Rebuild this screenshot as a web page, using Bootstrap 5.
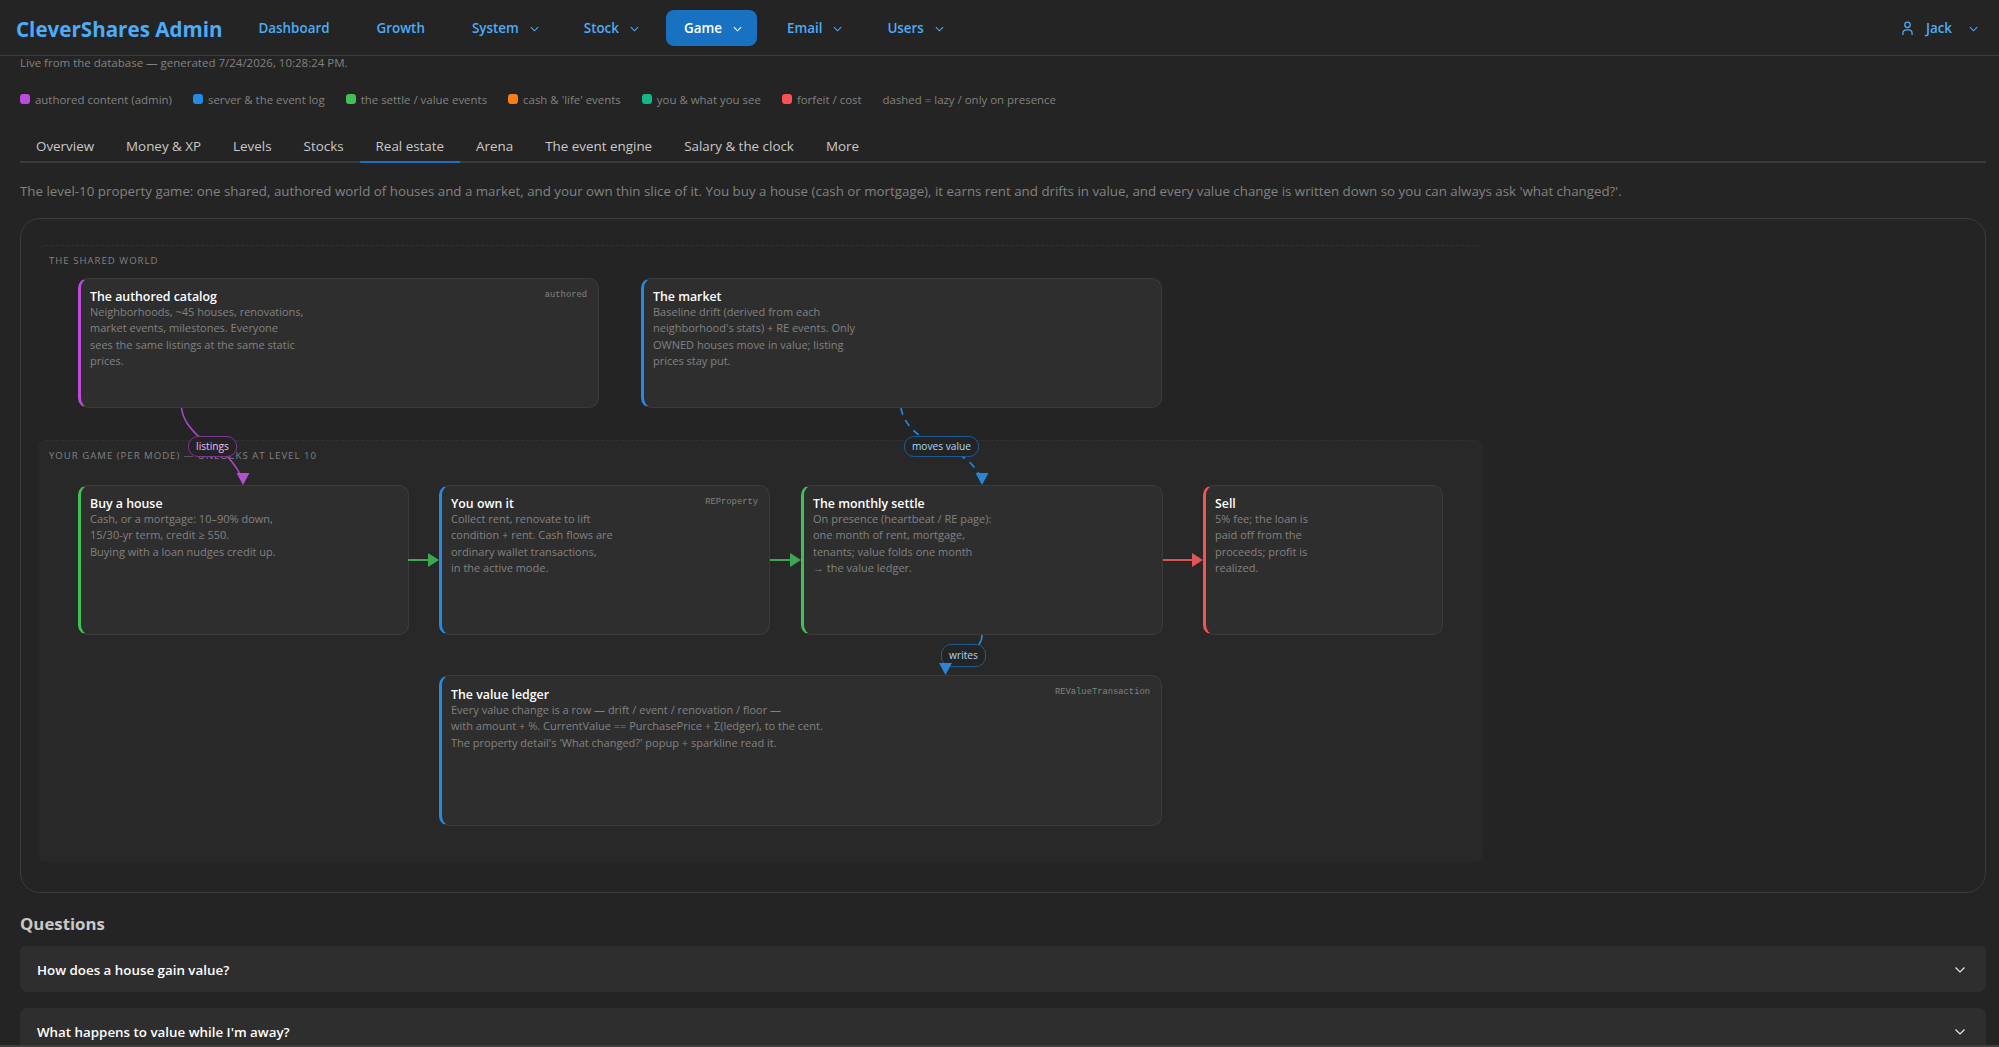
<!DOCTYPE html>
<html lang="en" data-bs-theme="dark">
<head>
    <meta charset="UTF-8">
    <meta name="viewport" content="width=device-width, initial-scale=1.0">
    <title>CleverShares Admin</title>
    <link href="https://cdn.jsdelivr.net/npm/bootstrap@5.3.0/dist/css/bootstrap.min.css" rel="stylesheet">
    <style>
        html, body {
            height: 100%;
            overflow: hidden;
        }

        body {
            background-color: #242424;
            color: #c9c9c9;
            font-family: "Open Sans", "Noto Sans", sans-serif;
            font-size: 13.2px;
        }

        .top-bar {
            height: 56px;
            padding: 0 10px 0 16px;
            background-color: #242424;
            border-bottom: 1px solid #3b3b3b;
        }

        .top-bar .brand-name {
            color: #4dabf7;
            font-size: 20.6px;
            font-weight: 700;
            padding: 3px 0 0;
            margin: 0 18px 0 0;
        }

        .top-links {
            gap: 12px;
        }

        .top-bar .navbar-nav .nav-link {
            display: flex;
            align-items: center;
            gap: 11px;
            height: 36px;
            padding: 2px 15px 0 18px;
            border-radius: 8px;
            color: #4dabf7;
            font-size: 13.4px;
            font-weight: 600;
        }

        .top-bar .navbar-nav .nav-link.plain-link {
            padding-right: 17px;
        }

        .top-bar .navbar-nav .nav-link.on {
            background-color: #1971c2;
            color: #fff;
        }

        .top-bar .navbar-nav .nav-link.user-link {
            padding-right: 11px;
        }

        .user-link svg.person {
            margin-right: 2px;
        }

        .user-link svg.user-caret {
            margin-left: 6px;
        }

        .page-body {
            padding: 0 13px 0 20px;
        }

        .gen-line {
            color: #828282;
            font-size: 11.5px;
            line-height: 14px;
        }

        .legend-row {
            margin-top: 20px;
            height: 20px;
            color: #828282;
            font-size: 11.45px;
            gap: 21px;
        }

        .legend-dot {
            display: inline-block;
            width: 10px;
            height: 10px;
            border-radius: 3px;
            margin-right: 5px;
        }

        .tab-row {
            margin-top: 13px;
            border-bottom: 2px solid #3b3b3b;
            gap: 0;
        }

        .tab-row .nav-link {
            padding: 13px 16px 0;
            margin-bottom: -2px;
            height: 40px;
            line-height: 20px;
            color: #c9c9c9;
            font-size: 13.4px;
            border: 0;
            border-bottom: 2px solid transparent;
            border-radius: 0;
            background: none;
        }

        .tab-row .nav-link.active {
            border: 0;
            border-bottom: 2px solid #1971c2;
            color: #c9c9c9;
            background: none;
        }

        .intro-text {
            margin: 17px 0 16px;
            line-height: 22px;
            color: #828282;
            font-size: 13.34px;
        }

        .flow-panel {
            position: relative;
            height: 675px;
            border: 1px solid #3b3b3b;
            border-radius: 20px;
        }

        .flow-zone {
            position: absolute;
            left: 17px;
            width: 1445px;
            padding: 8px 11px;
            border-top: 1px dashed #323232;
            border-radius: 8px;
            color: #828282;
            font-size: 9.6px;
            line-height: 14px;
            letter-spacing: 1px;
            text-transform: uppercase;
        }

        .zone-shared {
            top: 26px;
            height: 190px;
        }

        .zone-game {
            top: 221px;
            height: 422px;
            background-color: #282828;
        }

        .flow-node {
            position: absolute;
            padding: 10px 9px 0 9px;
            background-color: #2e2e2e;
            border: 1px solid #3b3b3b;
            border-left: 3px solid #228be6;
            border-radius: 10px;
            color: #828282;
            font-size: 11px;
            line-height: 16.3px;
        }

        .flow-node h6 {
            margin: 0;
            color: #fff;
            font-size: 12.35px;
            font-weight: 600;
            line-height: 15px;
        }

        .flow-tag {
            position: absolute;
            top: 10px;
            right: 11px;
            color: #828282;
            font-family: "Liberation Mono", monospace;
            font-size: 8.8px;
            line-height: 12px;
        }

        .node-grape { border-left-color: #be4bdb; }
        .node-green { border-left-color: #40c057; }
        .node-red { border-left-color: #fa5252; }

        #nodeCatalog { left: 57px; top: 59px; width: 521px; height: 130px; }
        #nodeMarket { left: 620px; top: 59px; width: 521px; height: 130px; }
        #nodeBuy { left: 57px; top: 266px; width: 331px; height: 150px; }
        #nodeOwn { left: 418px; top: 266px; width: 331px; height: 150px; }
        #nodeSettle { left: 780px; top: 266px; width: 362px; height: 150px; }
        #nodeSell { left: 1182px; top: 266px; width: 240px; height: 150px; }
        #nodeLedger { left: 418px; top: 456px; width: 723px; height: 151px; padding-top: 11px; }

        .flow-edges {
            position: absolute;
            left: 0;
            top: 0;
        }

        .edge-pill {
            position: absolute;
            height: 21px;
            line-height: 19px;
            background-color: #242424;
            border: 1px solid #1c5a94;
            border-radius: 10px;
            color: #a5d8ff;
            font-size: 10.2px;
            text-align: center;
        }

        #pillListings {
            left: 167px;
            top: 217px;
            width: 49px;
            border-color: #7f3592;
            color: #eebefa;
        }

        #pillMoves { left: 883px; top: 217px; width: 75px; }
        #pillWrites { left: 920px; top: 425px; width: 45px; height: 23px; line-height: 21px; }

        .questions-title {
            margin: 18px 0 9px;
            color: #c9c9c9;
            font-size: 16.8px;
            font-weight: 700;
            line-height: 26px;
        }

        .faq-list {
            --bs-accordion-bg: #2e2e2e;
            --bs-accordion-border-width: 0;
            --bs-accordion-btn-color: #fff;
            --bs-accordion-active-color: #fff;
            --bs-accordion-active-bg: #2e2e2e;
            --bs-accordion-btn-focus-box-shadow: none;
        }

        .faq-list .accordion-item {
            margin-bottom: 16px;
            border-radius: 8px;
        }

        .faq-list .accordion-button {
            height: 46px;
            padding: 1px 21px 0 17px;
            border-radius: 8px;
            font-size: 13.35px;
            font-weight: 600;
            box-shadow: none;
        }

        .faq-list .accordion-button::after {
            display: none;
        }

        .faq-list .accordion-button svg {
            margin-left: auto;
        }

        .bottom-strip {
            height: 2px;
            background-color: #3d413d;
        }
    </style>
</head>
<body>

    <nav class="navbar navbar-expand top-bar">
        <a class="navbar-brand brand-name" href="#">CleverShares Admin</a>
        <ul class="navbar-nav top-links">
            <li class="nav-item"><a class="nav-link plain-link" href="#">Dashboard</a></li>
            <li class="nav-item"><a class="nav-link plain-link" href="#">Growth</a></li>
            <li class="nav-item"><a class="nav-link" href="#">System <svg width="9" height="6" viewBox="0 0 10 6" fill="none" stroke="currentColor" stroke-width="1.2"><path d="M1 1l4 4 4-4"/></svg></a></li>
            <li class="nav-item"><a class="nav-link" href="#">Stock <svg width="9" height="6" viewBox="0 0 10 6" fill="none" stroke="currentColor" stroke-width="1.2"><path d="M1 1l4 4 4-4"/></svg></a></li>
            <li class="nav-item"><a class="nav-link on" href="#">Game <svg width="9" height="6" viewBox="0 0 10 6" fill="none" stroke="currentColor" stroke-width="1.2"><path d="M1 1l4 4 4-4"/></svg></a></li>
            <li class="nav-item"><a class="nav-link" href="#">Email <svg width="9" height="6" viewBox="0 0 10 6" fill="none" stroke="currentColor" stroke-width="1.2"><path d="M1 1l4 4 4-4"/></svg></a></li>
            <li class="nav-item"><a class="nav-link" href="#">Users <svg width="9" height="6" viewBox="0 0 10 6" fill="none" stroke="currentColor" stroke-width="1.2"><path d="M1 1l4 4 4-4"/></svg></a></li>
        </ul>
        <ul class="navbar-nav top-links ms-auto">
            <li class="nav-item">
                <a class="nav-link user-link" href="#">
                    <svg class="person" width="11" height="15" viewBox="0 0 12 16" fill="none" stroke="currentColor" stroke-width="1.4"><circle cx="6" cy="4" r="3"/><path d="M1 15v-2a3.500 3.500 0 0 1 3.500-3.500h3A3.500 3.500 0 0 1 11 13v2"/></svg>
                    Jack
                    <svg class="user-caret" width="9" height="6" viewBox="0 0 10 6" fill="none" stroke="currentColor" stroke-width="1.2"><path d="M1 1l4 4 4-4"/></svg>
                </a>
            </li>
        </ul>
    </nav>

    <div class="page-body">
        <div class="gen-line">Live from the database — generated 7/24/2026, 10:28:24 PM.</div>

        <div class="legend-row d-flex align-items-center">
            <span><i class="legend-dot" style="background:#be4bdb"></i>authored content (admin)</span>
            <span><i class="legend-dot" style="background:#228be6"></i>server &amp; the event log</span>
            <span><i class="legend-dot" style="background:#40c057"></i>the settle / value events</span>
            <span><i class="legend-dot" style="background:#fd7e14"></i>cash &amp; 'life' events</span>
            <span><i class="legend-dot" style="background:#12b886"></i>you &amp; what you see</span>
            <span><i class="legend-dot" style="background:#fa5252"></i>forfeit / cost</span>
            <span>dashed = lazy / only on presence</span>
        </div>

        <ul class="nav tab-row">
            <li class="nav-item"><a class="nav-link" href="#">Overview</a></li>
            <li class="nav-item"><a class="nav-link" href="#">Money &amp; XP</a></li>
            <li class="nav-item"><a class="nav-link" href="#">Levels</a></li>
            <li class="nav-item"><a class="nav-link" href="#">Stocks</a></li>
            <li class="nav-item"><a class="nav-link active" href="#">Real estate</a></li>
            <li class="nav-item"><a class="nav-link" href="#">Arena</a></li>
            <li class="nav-item"><a class="nav-link" href="#">The event engine</a></li>
            <li class="nav-item"><a class="nav-link" href="#">Salary &amp; the clock</a></li>
            <li class="nav-item"><a class="nav-link" href="#">More</a></li>
        </ul>

        <p class="intro-text">The level-10 property game: one shared, authored world of houses and a market, and your own thin slice of it. You buy a house (cash or mortgage), it earns rent and drifts in value, and every value change is written down so you can always ask 'what changed?'.</p>

        <div class="flow-panel">
            <div class="flow-zone zone-shared">The shared world</div>
            <div class="flow-zone zone-game">Your game (per mode) — unlocks at level 10</div>

            <div class="flow-node node-grape" id="nodeCatalog">
                <span class="flow-tag">authored</span>
                <h6>The authored catalog</h6>
                Neighborhoods, ~45 houses, renovations,<br>market events, milestones. Everyone<br>sees the same listings at the same static<br>prices.
            </div>
            <div class="flow-node" id="nodeMarket">
                <h6>The market</h6>
                Baseline drift (derived from each<br>neighborhood's stats) + RE events. Only<br>OWNED houses move in value; listing<br>prices stay put.
            </div>
            <div class="flow-node node-green" id="nodeBuy">
                <h6>Buy a house</h6>
                Cash, or a mortgage: 10–90% down,<br>15/30-yr term, credit ≥ 550.<br>Buying with a loan nudges credit up.
            </div>
            <div class="flow-node" id="nodeOwn">
                <span class="flow-tag">REProperty</span>
                <h6>You own it</h6>
                Collect rent, renovate to lift<br>condition + rent. Cash flows are<br>ordinary wallet transactions,<br>in the active mode.
            </div>
            <div class="flow-node node-green" id="nodeSettle">
                <h6>The monthly settle</h6>
                On presence (heartbeat / RE page):<br>one month of rent, mortgage,<br>tenants; value folds one month<br>→ the value ledger.
            </div>
            <div class="flow-node node-red" id="nodeSell">
                <h6>Sell</h6>
                5% fee; the loan is<br>paid off from the<br>proceeds; profit is<br>realized.
            </div>
            <div class="flow-node" id="nodeLedger">
                <span class="flow-tag">REValueTransaction</span>
                <h6>The value ledger</h6>
                Every value change is a row — drift / event / renovation / floor —<br>with amount + %. CurrentValue == PurchasePrice + Σ(ledger), to the cent.<br>The property detail's 'What changed?' popup + sparkline read it.
            </div>

            <svg class="flow-edges" width="1964" height="673" viewBox="21 219 1964 673" fill="none" stroke-width="1.6">
                <path d="M181.500 408C183 420 190 428 198 436L228 457C233 463 237 468 240 474" stroke="#a847c2"/>
                <polygon points="236.500,473 249.500,473 243,485" fill="#b44fd0"/>
                <path d="M901 408C903 420 910 428 920 436L963 457C969 461 975 467 979 474" stroke="#228be6" stroke-dasharray="7 6"/>
                <polygon points="975.500,473 988.500,473 982,485" fill="#2b84d6"/>
                <path d="M408 560H430" stroke="#3da854" stroke-width="2"/>
                <polygon points="428,553 439,560 428,567" fill="#3da854"/>
                <path d="M770 560H792" stroke="#3da854" stroke-width="2"/>
                <polygon points="790,553 801,560 790,567" fill="#3da854"/>
                <path d="M1163 560H1194" stroke="#d85454" stroke-width="2"/>
                <polygon points="1192,553 1203,560 1192,567" fill="#e05555"/>
                <path d="M982 635C982 645 975 648 970 652" stroke="#228be6"/>
            </svg>

            <div class="edge-pill" id="pillListings">listings</div>
            <div class="edge-pill" id="pillMoves">moves value</div>
            <div class="edge-pill" id="pillWrites">writes</div>

            <svg class="flow-edges" width="1964" height="673" viewBox="21 219 1964 673" fill="none">
                <polygon points="939,663 952,663 945.500,675" fill="#2b84d6"/>
            </svg>
        </div>

        <h5 class="questions-title">Questions</h5>

        <div class="accordion faq-list" id="faqList">
            <div class="accordion-item">
                <h2 class="accordion-header"><button class="accordion-button collapsed" type="button">How does a house gain value?<svg width="10" height="6" viewBox="0 0 10 6" fill="none" stroke="#e8e8e8" stroke-width="1.2"><path d="M.5.5l4.500 4.500 4.500-4.500"/></svg></button></h2>
            </div>
            <div class="accordion-item">
                <h2 class="accordion-header"><button class="accordion-button collapsed" type="button">What happens to value while I'm away?<svg width="10" height="6" viewBox="0 0 10 6" fill="none" stroke="#e8e8e8" stroke-width="1.2"><path d="M.5.5l4.500 4.500 4.500-4.500"/></svg></button></h2>
            </div>
        </div>
    </div>

    <div class="bottom-strip fixed-bottom"></div>

    <script src="https://cdn.jsdelivr.net/npm/bootstrap@5.3.0/dist/js/bootstrap.bundle.min.js"></script>
</body>
</html>
